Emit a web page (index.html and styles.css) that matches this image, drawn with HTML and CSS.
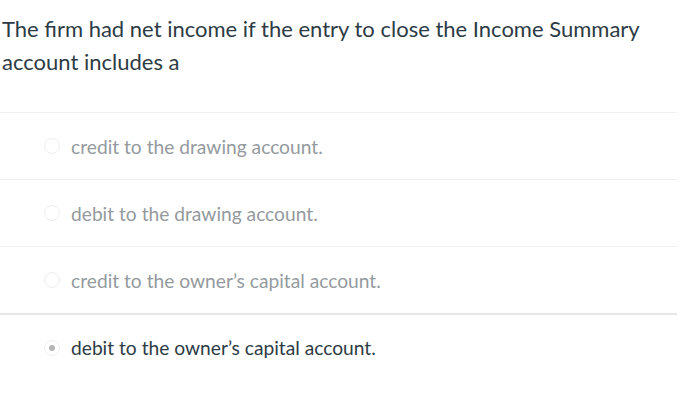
FILE: index.html
```html
<!DOCTYPE html>
<html>
<head>
<meta charset="utf-8">
<link rel="stylesheet" href="styles.css">
</head>
<body>
<div class="quiz">
  <p class="question">The firm had net income if the entry to close the Income Summary account includes a</p>
  <ul class="answers">
    <li class="answer"><span class="radio"></span><span class="label">credit to the drawing account.</span></li>
    <li class="answer"><span class="radio"></span><span class="label">debit to the drawing account.</span></li>
    <li class="answer"><span class="radio"></span><span class="label">credit to the owner’s capital account.</span></li>
    <li class="answer selected"><span class="radio"></span><span class="label">debit to the owner’s capital account.</span></li>
  </ul>
</div>
</body>
</html>
```
FILE: styles.css
```css
html, body {
  margin: 0;
  padding: 0;
  background: #ffffff;
}
.quiz {
  width: 677px;
  font-family: Lato, "Liberation Sans", sans-serif;
}
.question {
  margin: 0;
  padding: 12px 0 0 2px;
  font-size: 22px;
  line-height: 33px;
  color: #2d3b45;
  height: 112px;
  box-sizing: border-box;
}
.answers {
  list-style: none;
  margin: 0;
  padding: 0;
}
.answer {
  display: flex;
  align-items: center;
  height: 67px;
  border-top: 1px solid #f0f0f0;
  box-sizing: border-box;
  padding-left: 44px;
  gap: 11px;
}
.answer.selected {
  border-top: 2px solid #e6e6e6;
}
.radio {
  width: 16px;
  height: 16px;
  border: 1px solid #eeeeee;
  border-radius: 50%;
  box-sizing: border-box;
  display: flex;
  align-items: center;
  justify-content: center;
  flex: none;
}
.selected .radio::after {
  content: "";
  width: 6px;
  height: 6px;
  border-radius: 50%;
  background: #b5b5b5;
}
.label {
  font-size: 19.2px;
  color: #949a9e;
}
.selected .label {
  color: #2d3b45;
}
```
